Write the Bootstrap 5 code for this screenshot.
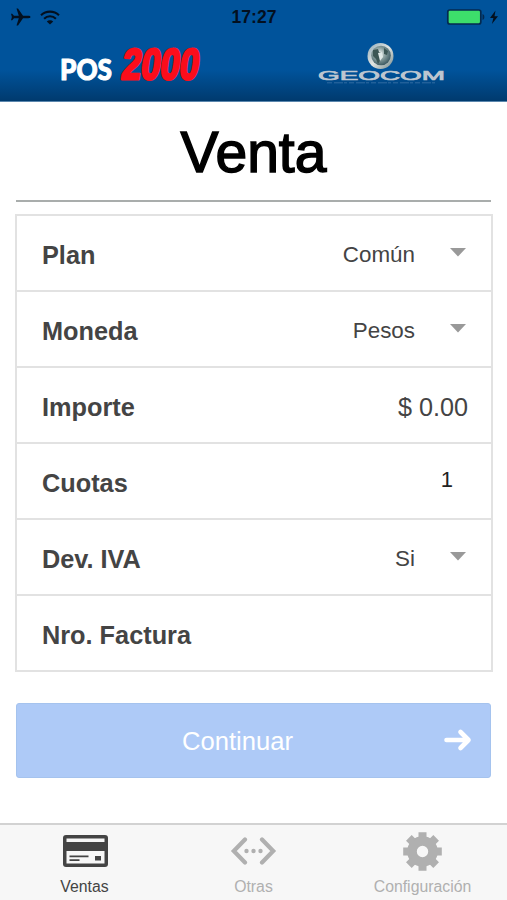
<!DOCTYPE html>
<html lang="es">
<head>
<meta charset="utf-8">
<meta name="viewport" content="width=device-width, initial-scale=1">
<title>Venta</title>
<link href="https://cdn.jsdelivr.net/npm/bootstrap@5.3.0/dist/css/bootstrap.min.css" rel="stylesheet">
<style>
  body { font-family: "Liberation Sans", Arial, sans-serif; height: 900px; overflow: hidden; }
  svg { display: block; overflow: visible; }
  .app-header { height: 102px; background: linear-gradient(#00539b 0, #00539b 70px, #003a6e 101px, #5b87ad 101px); }
  .status { height: 34px; padding: 0 9px 0 10px; }
  .wifi { margin-left: 9px; }
  .clock { font-size: 17.5px; font-weight: 700; line-height: 34px; color: #03101f; width: 46px; }
  .side { width: 160px; }
  .logos { padding: 10px 62px 0 60px; }
  .page-title { font-size: 57px; font-weight: 400; line-height: 64px; height: 98px; padding-top: 18px; color: #000; -webkit-text-stroke: 1.5px #000; }
  .main-area { padding: 0 15px; }
  .title-rule { height: 2px; background: #a9adac; margin: 0 1px 12px; }
  .form-list { --bs-list-group-border-color: #e2e2e2; --bs-list-group-border-width: 2px; --bs-list-group-border-radius: 0; margin-right: -1px; }
  .form-list .list-group-item { height: 76px; padding: 5px 23px 0 25px; color: #444; }
  .form-list .list-group-item:first-child { height: 78px; }
  .field-label { font-size: 25.3px; font-weight: 700; }
  .field-value { font-size: 22.4px; margin-top: -1px; }
  .field-amount { font-size: 25.2px; }
  .field-count { font-size: 22px; color: #222; padding: 0 15px 8px 0; }
  .chevron { margin: -6px 2px 0 35px; }
  .btn-continue { height: 75px; margin: 31px 1px 0; padding: 2px 18px 0 0; border-radius: 3px; font-size: 25.6px; width: auto;
    --bs-btn-disabled-bg: #aecaf7; --bs-btn-disabled-border-color: #a5c3ee; --bs-btn-disabled-opacity: 1; }
  .btn-text { padding-left: 13px; }
  .tabs { height: 77px; background: #f7f7f7; border-top: 2px solid #d2d2d2; color: #b0b0b0; font-size: 15.8px; }
  .tabs a { color: inherit; }
  .tabs a.current { color: #444; }
  .tab-icon { height: 52px; }
  .tab-icon .card-glyph { margin-left: 1px; }
  .tab-name { line-height: 20px; }
</style>
</head>
<body class="bg-white d-flex flex-column">
<header class="app-header flex-shrink-0">
  <div class="status d-flex align-items-center justify-content-between">
    <div class="side d-flex align-items-center">
      <svg width="21" height="18" viewBox="0 0 21 18" fill="#03101f"><path d="M20.500 9c0 .8-1 1.200-2.300 1.200h-5.200L8 17.500H6.500L8.800 10.200H4L2.200 12.300H1L1.900 9 1 5.700h1.200L4 7.800h4.800L6.500 .500H8l5 7.300h5.200c1.300 0 2.300.4 2.300 1.200z"/></svg>
      <svg class="wifi" width="20" height="15" viewBox="0 0 20 15" fill="none" stroke="#03101f" stroke-width="2.100"><path d="M1 5.200a13 13 0 0 1 18 0M4.100 8.700a8.400 8.400 0 0 1 11.800 0"/><path d="M10 14.500 6.800 11.500a4.600 4.600 0 0 1 6.400 0z" fill="#03101f" stroke="none"/></svg>
    </div>
    <div class="clock text-center">17:27</div>
    <div class="side d-flex align-items-center justify-content-end">
      <svg width="50" height="16" viewBox="0 0 50 16"><rect x="-.2" y="1" width="33" height="14" rx="2" fill="#3dde6b" stroke="#042a50" stroke-width="1.700"/><path d="M34.500 5c2.500 .5 2.500 5.500 0 6z" fill="#042a50"/><path d="M47.500 1.500 42 9h3.400l-1.500 6L50 7.300h-3.500z" fill="#03101f"/></svg>
    </div>
  </div>
  <div class="logos d-flex justify-content-between">
    <svg width="140" height="42" viewBox="0 0 140 42" font-weight="700">
      <text x="0" y="35.500" font-size="28" font-family="Lato, sans-serif" font-weight="900" textLength="52" lengthAdjust="spacingAndGlyphs" fill="#fff" stroke="#fff" stroke-width="1" stroke-linejoin="round">POS</text>
      <text x="61.500" y="35" font-size="43" font-family="Liberation Sans, Arial, sans-serif" textLength="77" lengthAdjust="spacingAndGlyphs" transform="translate(-1 0) translate(0 35) skewX(-8) translate(0 -35)" fill="#fb0d1b" stroke="#fb0d1b" stroke-width="3" stroke-linejoin="round">2000</text>
    </svg>
    <svg width="127" height="42" viewBox="0 0 127 42" font-family="Liberation Sans, Arial, sans-serif">
      <defs>
        <radialGradient id="globe" cx=".42" cy=".4" r=".65"><stop offset="0" stop-color="#f4f7f5"/><stop offset=".45" stop-color="#8ba09f"/><stop offset="1" stop-color="#35535c"/></radialGradient>
        <linearGradient id="rim" x2="1" y2="1"><stop offset="0" stop-color="#8ea9b8"/><stop offset=".5" stop-color="#e3e6e2"/><stop offset="1" stop-color="#718789"/></linearGradient>
      </defs>
      <circle cx="62.500" cy="12" r="13" fill="url(#rim)"/>
      <circle cx="63" cy="11.500" r="9.800" fill="url(#globe)"/>
      <path d="M55 6l5-1 1 3 3 1-1 6-3 5-2-5-3-3zM66 4l4 3-1 4-3-1z" fill="#3c5654"/>
      <path d="M60 9l4-1 1 5-3 4z" fill="#dfe8e6"/>
      <text x="0" y="35.500" font-size="13.500" textLength="127" lengthAdjust="spacingAndGlyphs" fill="#bdc6d0" stroke="#bdc6d0" stroke-width=".7">GEOCOM</text>
      <path d="M9 38.800h108" stroke="#2f6ba2" stroke-width="1" stroke-dasharray="5 2 9 1 3 2"/>
    </svg>
  </div>
</header>
<main class="main-area flex-grow-1">
  <h1 class="page-title text-center mb-0">Venta</h1>
  <div class="title-rule"></div>
  <div class="list-group form-list">
    <div class="list-group-item d-flex align-items-center"><span class="field-label me-auto">Plan</span><span class="field-value">Común</span><svg class="chevron" width="16" height="9" viewBox="0 0 16 9"><path d="M0 0h16L8 8.500z" fill="#999"/></svg></div>
    <div class="list-group-item d-flex align-items-center"><span class="field-label me-auto">Moneda</span><span class="field-value">Pesos</span><svg class="chevron" width="16" height="9" viewBox="0 0 16 9"><path d="M0 0h16L8 8.500z" fill="#999"/></svg></div>
    <div class="list-group-item d-flex align-items-center"><span class="field-label me-auto">Importe</span><span class="field-amount">$ 0.00</span></div>
    <div class="list-group-item d-flex align-items-center"><span class="field-label me-auto">Cuotas</span><span class="field-count">1</span></div>
    <div class="list-group-item d-flex align-items-center"><span class="field-label me-auto">Dev. IVA</span><span class="field-value">Si</span><svg class="chevron" width="16" height="9" viewBox="0 0 16 9"><path d="M0 0h16L8 8.500z" fill="#999"/></svg></div>
    <div class="list-group-item d-flex align-items-center"><span class="field-label me-auto">Nro. Factura</span></div>
  </div>
  <div class="d-grid">
    <button class="btn btn-primary btn-continue d-flex align-items-center" disabled><span class="btn-text flex-grow-1 text-center">Continuar</span>
      <svg width="27" height="22" viewBox="0 0 27 22" fill="none" stroke="#fff" stroke-width="4.600" stroke-linecap="round" stroke-linejoin="round"><path d="M1.500 9h22M15.500 1l8 8-8 8"/></svg>
    </button>
  </div>
</main>
<nav class="tabs row g-0 text-center flex-shrink-0">
  <a class="col current text-decoration-none" href="#"><div class="tab-icon d-flex align-items-center justify-content-center">
    <svg class="card-glyph" width="45" height="32" viewBox="0 0 45 32"><rect width="45" height="32" rx="3" fill="#444"/><path d="M3.500 3.500h38v3.500h-38zM3.500 16h38v12.500h-38z" fill="#f7f7f7"/><path d="M6.500 20.500h19v1.700h-19zM6.500 24.200h10v1.700h-10zM32 21h6v4.500h-6z" fill="#444"/></svg></div><div class="tab-name">Ventas</div></a>
  <a class="col text-decoration-none" href="#"><div class="tab-icon d-flex align-items-center justify-content-center">
    <svg width="45" height="28" viewBox="0 0 45 28" fill="none" stroke="#b0b0b0" stroke-width="4.200" stroke-linecap="round"><path d="M14 2.500 2.800 14 14 25.500M31 2.500 42.200 14 31 25.500" stroke-linejoin="miter"/><g fill="#b0b0b0" stroke="none"><circle cx="15.500" cy="14" r="2.200"/><circle cx="22.500" cy="14" r="2.200"/><circle cx="29.500" cy="14" r="2.200"/></g></svg></div><div class="tab-name">Otras</div></a>
  <a class="col text-decoration-none" href="#"><div class="tab-icon d-flex align-items-center justify-content-center">
    <svg width="39" height="39" viewBox="-19.500 -19.500 39 39" fill="#b0b0b0"><circle r="10.500" fill="none" stroke="#b0b0b0" stroke-width="9.600"/><g><path id="tooth" d="M-4-19.300h8v6h-8zM-4 13.300h8v6h-8zM-19.300-4h6v8h-6zM13.300-4h6v8h-6z"/><use href="#tooth" transform="rotate(45)"/></g></svg></div><div class="tab-name">Configuración</div></a>
</nav>
<script src="https://cdn.jsdelivr.net/npm/bootstrap@5.3.0/dist/js/bootstrap.bundle.min.js"></script>
</body>
</html>
